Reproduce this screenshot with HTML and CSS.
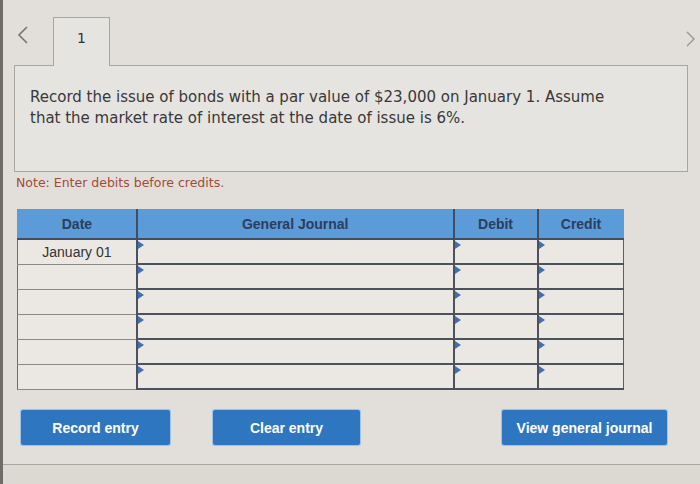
FILE: index.html
```html
<!DOCTYPE html>
<html>
<head>
<meta charset="utf-8">
<link rel="stylesheet" href="styles.css">
</head>
<body>
<div class="page">
  <div class="top">
    <span class="chev chev-left"><svg width="12" height="18" viewBox="0 0 12 18"><path d="M10 1 L2 9 L10 17" fill="none" stroke="#77736e" stroke-width="1.6"/></svg></span>
    <div class="tab">1</div>
    <span class="chev chev-right"><svg width="10" height="18" viewBox="0 0 10 18"><path d="M1 2 L8 9 L1 16" fill="none" stroke="#9a9690" stroke-width="1.4"/></svg></span>
  </div>
  <div class="question">
    <p>Record the issue of bonds with a par value of $23,000 on January 1. Assume that the market rate of interest at the date of issue is 6%.</p>
  </div>
  <p class="note">Note: Enter debits before credits.</p>
  <table class="journal">
    <colgroup>
      <col class="c-date"><col class="c-gj"><col class="c-dr"><col class="c-cr">
    </colgroup>
    <thead>
      <tr><th class="h-date">Date</th><th>General Journal</th><th>Debit</th><th>Credit</th></tr>
    </thead>
    <tbody>
      <tr><td class="date">January 01</td><td class="in"></td><td class="in"></td><td class="in"></td></tr>
      <tr><td class="date"></td><td class="in"></td><td class="in"></td><td class="in"></td></tr>
      <tr><td class="date"></td><td class="in"></td><td class="in"></td><td class="in"></td></tr>
      <tr><td class="date"></td><td class="in"></td><td class="in"></td><td class="in"></td></tr>
      <tr><td class="date"></td><td class="in"></td><td class="in"></td><td class="in"></td></tr>
      <tr><td class="date"></td><td class="in"></td><td class="in"></td><td class="in"></td></tr>
    </tbody>
  </table>
  <div class="actions">
    <button class="btn btn-record">Record entry</button>
    <button class="btn btn-clear">Clear entry</button>
    <button class="btn btn-view">View general journal</button>
  </div>
  <div class="footer"></div>
</div>
</body>
</html>
```
FILE: styles.css
```css
html, body {
  margin: 0;
  padding: 0;
  background: #dedbd6;
}
.page {
  width: 697px;
  height: 484px;
  border-left: 3px solid #6f6c68;
  background: #e2dfda;
  font-family: "DejaVu Sans", Verdana, sans-serif;
  color: #333;
  overflow: hidden;
}
.top {
  height: 65px;
  display: flex;
  align-items: flex-start;
}
.chev {
  display: block;
  line-height: 0;
}
.chev-left {
  margin-left: 14px;
  margin-top: 26px;
}
.tab {
  position: relative;
  z-index: 1;
  margin-left: 24px;
  margin-top: 17px;
  width: 57px;
  height: 49px;
  box-sizing: border-box;
  border: 1px solid #a9a6a1;
  border-bottom: none;
  background: #e6e4e0;
  text-align: center;
  font-size: 14px;
  padding-top: 12px;
  color: #333;
}
.chev-right {
  margin-left: auto;
  margin-right: 4px;
  margin-top: 30px;
}
.question {
  margin-left: 11px;
  width: 674px;
  height: 107px;
  box-sizing: border-box;
  border: 1px solid #a9a6a1;
  background: #e6e4e0;
  padding: 21px 80px 0 15px;
}
.question p {
  margin: 0;
  font-size: 15px;
  line-height: 21px;
  color: #383838;
}
.note {
  margin: 4px 0 0 13px;
  font-size: 12.5px;
  line-height: 14px;
  color: #a24a3c;
}
.journal {
  margin: 19px 0 0 14px;
  border-collapse: collapse;
  table-layout: fixed;
  width: 607px;
  font-family: "Liberation Sans", Arial, sans-serif;
}
.c-date { width: 118px; }
.c-gj { width: 313px; }
.c-dr { width: 83px; }
.c-cr { width: 85px; }
.journal th {
  height: 29px;
  padding: 0;
  background: #5b9bd8;
  color: #2b3e5c;
  font-size: 14px;
  font-weight: bold;
  border-bottom: 2px solid #3e4e63;
  border-left: 2px solid #3e4e63;
}
.journal th.h-date {
  border-left: 1px solid #5b9bd8;
}
.journal td {
  height: 23px;
  padding: 0;
  background: #ebe8e4;
}
.journal td.date {
  text-align: center;
  font-size: 14px;
  line-height: 16px;
  color: #333;
  border-bottom: 1px solid #8c8984;
  border-left: 1px solid #6f6c68;
  vertical-align: middle;
}
.journal td.in {
  position: relative;
  border-left: 2px solid #4b525e;
  border-bottom: 2px solid #4b525e;
  border-right: 1px solid #5c5f66;
}
.journal td.in::before {
  content: "";
  position: absolute;
  left: 0;
  top: 1px;
  border-top: 4px solid transparent;
  border-bottom: 4px solid transparent;
  border-left: 6px solid #3f6fb3;
}
.actions {
  display: flex;
  align-items: flex-start;
  margin-top: 20px;
  height: 35px;
}
.btn {
  height: 35px;
  border: none;
  border-radius: 2px;
  background: #2f76c1;
  color: #fff;
  font-family: "Liberation Sans", Arial, sans-serif;
  font-weight: bold;
  font-size: 14px;
  padding: 0;
  box-shadow: 0 0 0 1px #9fc3e8;
}
.btn-record {
  width: 149px;
  margin-left: 18px;
}
.btn-clear {
  width: 147px;
  margin-left: 43px;
}
.btn-view {
  width: 165px;
  margin-left: 142px;
}
.footer {
  margin-top: 19px;
  border-top: 1px solid #aaa6a0;
  height: 40px;
  background: #dcd8d2;
}
```
